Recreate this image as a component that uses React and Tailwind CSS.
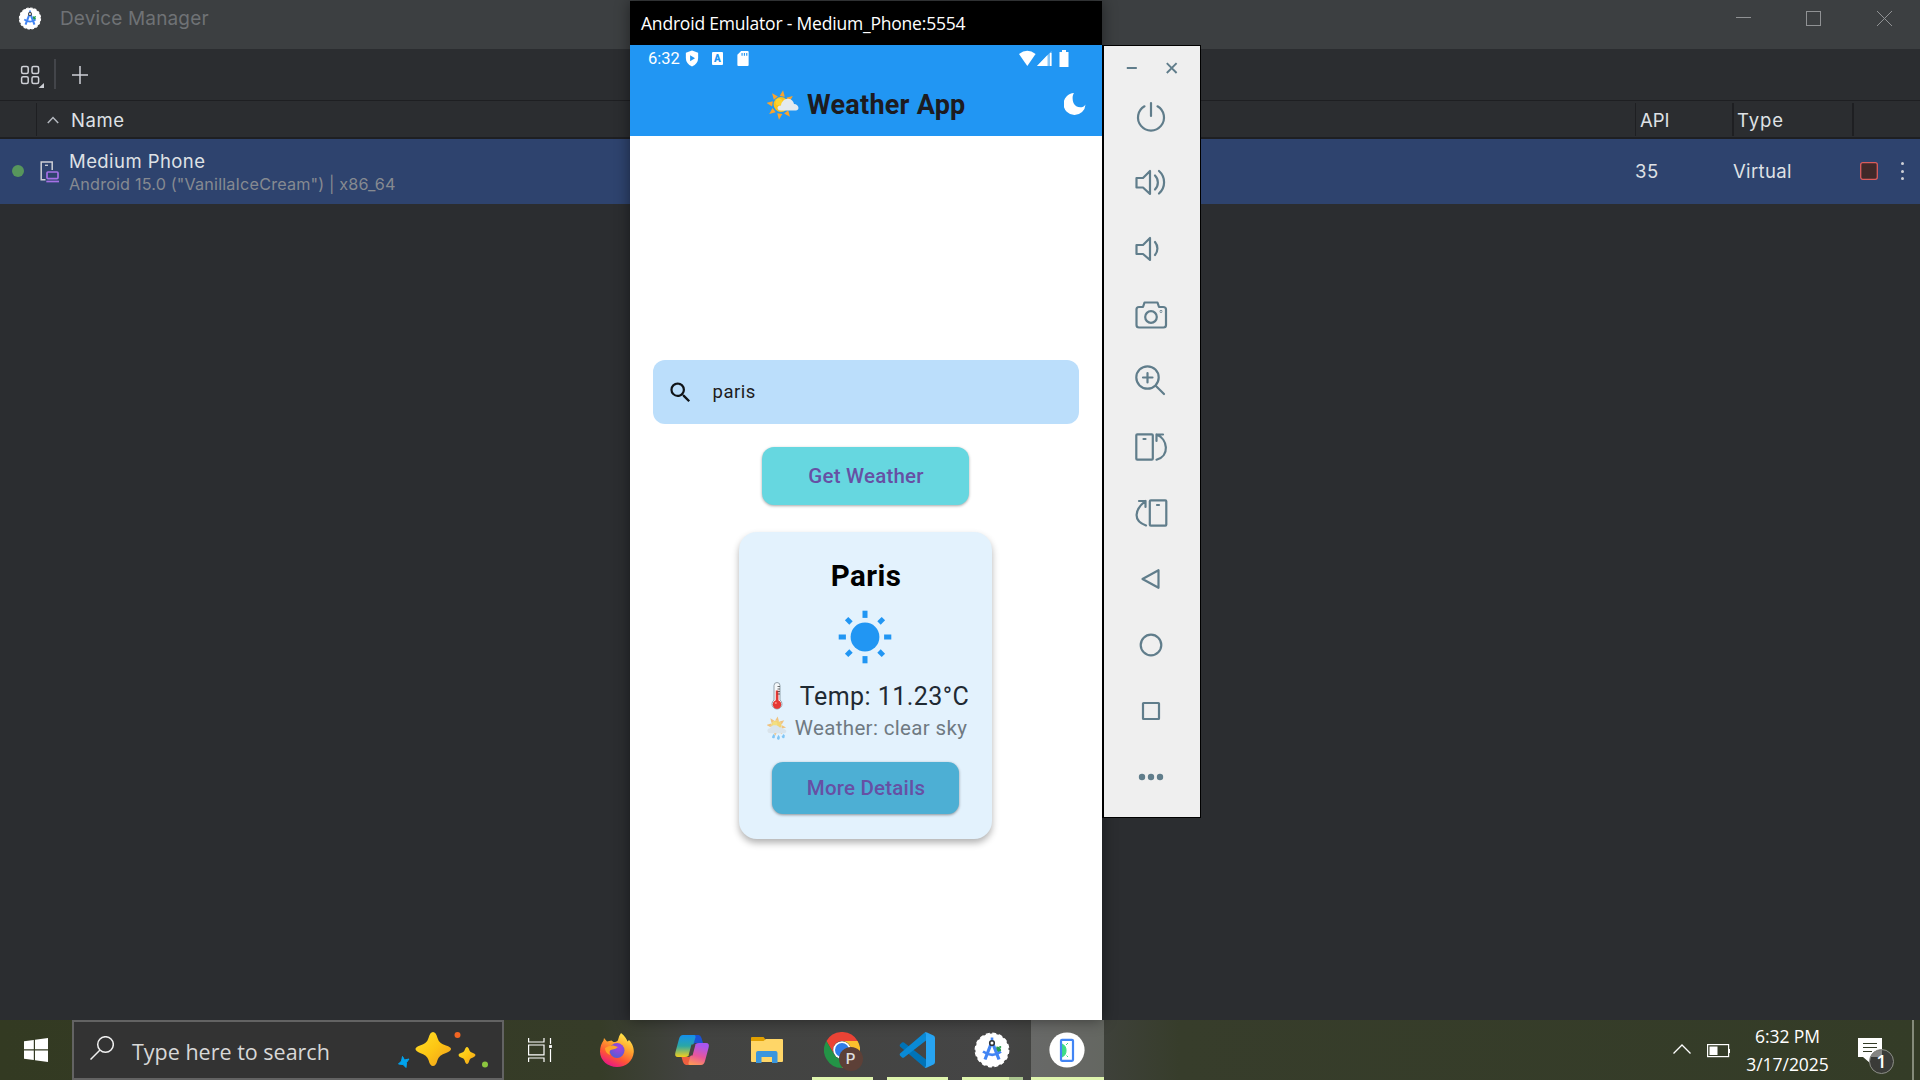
import React from "react";

const SLATE = "#607d8b";

/* ---------- weather glyphs ---------- */

function SunCloud({ rain = false, className }) {
  return (
    <svg viewBox={rain ? "1 -1 28 33" : "0 0 32 32"} className={className}>
      <g transform={rain ? "translate(0 -4)" : undefined}>
        <g fill="#f9a42c">
          {[8, 53, 98, 143, 188, 233, 278, 323].map((a) => (
            <path key={a} d="M11.4 7.4L14 1.2L16.6 7.4Z" transform={`rotate(${a} 14 17) translate(0 ${rain ? 2 : 1})`} />
          ))}
        </g>
        <circle cx="14" cy="16.5" r="7.4" fill="#fcc21b" />
        <circle cx="12" cy="14" r="3.5" fill="#fdd835" opacity=".8" />
      </g>
      <path
        d={
          rain
            ? "M6.5 23C3 23 1.5 21 1.5 19S3.400 15.500 5.800 15.800C6.500 12.500 9 11.800 12 11.800C15 11.800 17 12.500 18 14.500C20.500 13.800 22.500 15 23 16.800C26 16.500 28 18 28 20S26.500 23 24 23Z"
            : "M14 22.500C11.500 22.500 10.500 21.200 10.500 19.800S12 17.300 14 17.500C14.500 13.500 17.500 10.500 21.500 10.800C24.500 11 26.500 13.500 27 16C29.500 16 31.500 17.800 31.500 20C31.500 22 29.500 22.500 28 22.500Z"
        }
        fill={rain ? "#d3dce2" : "#e4eaee"}
      />
      {rain && (
        <g fill="#40a9f0">
          <path d="M10 24L12 26Q12.500 30 10 30Q8 30 8 28Z" />
          <path d="M17 25L19 28Q19 32 16.500 32Q14.500 31 15 29Z" />
          <path d="M24 24L26 26Q26 30 23.500 30Q21.500 29 22 27Z" />
        </g>
      )}
    </svg>
  );
}

function Thermometer() {
  return (
    <svg viewBox="0 0 12 28" className="-mt-0.5 h-7 w-3">
      <path d="M3 3.500a3 3 0 0 1 6 0v14.500a5 5 0 1 1-6 0Z" fill="#f5f8fa" stroke="#94a3ad" strokeWidth="1" />
      <path d="M4.800 8.500h2.600v10.300a3.900 3.900 0 1 1-2.600 0Z" fill="#e53935" />
      <circle cx="6" cy="22.500" r="4.200" fill="#e53935" />
      <circle cx="4.800" cy="21" r="1.100" fill="#ff8a80" />
      <path d="M6.500 4.500H9M6.500 7H9M6.500 9.500H9M6.500 12H9" stroke="#444" strokeWidth=".8" />
    </svg>
  );
}

function SunnyIcon() {
  return (
    <svg viewBox="-27 -27 54 54" className="h-[54px] w-[54px]" fill="#2196f3">
      <circle r="14.400" />
      {[0, 90, 180, 270].map((a) => (
        <rect key={a} x="-2.500" y="-26.300" width="5" height="7.200" transform={`rotate(${a})`} />
      ))}
      {[45, 135, 225, 315].map((a) => (
        <rect key={a} x="-2.400" y="-26" width="4.800" height="6.200" transform={`rotate(${a})`} />
      ))}
    </svg>
  );
}

/* ---------- Android Studio device manager ---------- */

function StudioLogo({ className }) {
  return (
    <svg viewBox="0 0 36 36" className={className}>
      <circle cx="18" cy="18" r="16.600" fill="#fff" stroke="#fff" strokeWidth="1.600" strokeDasharray="4 2.500" />
      <path d="M22.500 14.500c3 0 4.500 1.800 4.700 4l-2.400 2.500-3-3Z" fill="#249b4c" />
      <circle cx="26.200" cy="15" r="1.100" fill="#249b4c" />
      <path d="M17 12L11 27.500M19 12L25 27.500" stroke="#4285f4" strokeWidth="3.200" fill="none" />
      <path d="M9 19.500Q18 26 27 19.800" stroke="#4285f4" strokeWidth="2.600" fill="none" />
      <path d="M18 5.500V9" stroke="#4285f4" strokeWidth="2.600" />
      <circle cx="18" cy="11" r="2.300" fill="#fff" stroke="#30353a" strokeWidth="1.600" />
    </svg>
  );
}

function TitleBar() {
  return (
    <div className="flex h-[49px] items-start bg-[#3c3f41]">
      <StudioLogo className="ml-[18px] mt-[7px] h-[23px] w-6" />
      <div className="ml-[18px] mt-[7px] text-[19px] leading-6 tracking-[0.150px] text-[#6f7275]">Device Manager</div>
      <svg viewBox="0 0 160 20" className="ml-auto mr-6 mt-2 h-5 w-40" fill="none" stroke="#909294" shapeRendering="crispEdges">
        <path d="M0 9.500H15" />
        <rect x="70.500" y="3.500" width="14" height="14" />
        <path d="M141 3L156 18M156 3L141 18" shapeRendering="auto" />
      </svg>
    </div>
  );
}

function Toolbar() {
  return (
    <div className="flex h-[52px] items-start border-b border-[#1e1f22] bg-[#2b2d30]">
      <svg viewBox="0 0 25 24" className="ml-5 mt-4 h-6 w-[25px]" fill="none" stroke="#ced0d6" strokeWidth="1.500">
        <rect x="1.600" y="1.600" width="6.600" height="6.800" rx="1.500" />
        <rect x="12" y="1.600" width="6.600" height="6.800" rx="1.500" />
        <rect x="1.600" y="11.800" width="6.600" height="6.800" rx="1.500" />
        <rect x="12" y="11.800" width="6.600" height="6.800" rx="1.500" />
        <path d="M24 18v5h-5.500Z" fill="#ced0d6" stroke="none" />
      </svg>
      <div className="ml-[9px] mt-2.5 h-[30px] w-0.5 bg-[#43454a]" />
      <svg viewBox="0 0 18 20" className="ml-[15px] mt-4 h-5 w-[18px]" stroke="#ced0d6" strokeWidth="1.500">
        <path d="M9 1V19M1 10H17" />
      </svg>
    </div>
  );
}

function HeaderRow() {
  return (
    <div className="flex h-[38px] items-start border-b-2 border-[#1e1f22] bg-[#2b2d30] pt-0.5 text-[18.500px] leading-[34px] text-[#dfe1e5]">
      <div className="h-[33px] w-[37px] border-r border-[#1e1f22]" />
      <div className="flex h-[33px] flex-1 border-r border-[#1e1f22]">
        <svg viewBox="0 0 12 8" className="ml-[10px] mt-[13px] h-2 w-3" fill="none" stroke="#b4b8bf" strokeWidth="1.500">
          <path d="M.8 7L6 1.500L11.200 7" />
        </svg>
        <span className="ml-3 tracking-[0.600px]">Name</span>
      </div>
      <div className="h-[33px] w-[98px] border-r-2 border-[#1e1f22] pl-[4px]">API</div>
      <div className="h-[33px] w-[120px] border-r-2 border-[#1e1f22] pl-[3px] tracking-[0.900px]">Type</div>
      <div className="w-[66px]" />
    </div>
  );
}

function DeviceRow() {
  return (
    <div className="flex h-[65px] items-center bg-[#2e436e] text-[18.500px] text-[#dfe1e5]">
      <div className="-mt-0.5 ml-3 h-3 w-3 rounded-full bg-[#57965c]" />
      <svg viewBox="0 0 20 22" className="ml-4 h-[22px] w-5" fill="none">
        <path d="M5.500 18.800H1.200V.9H12.200V9" stroke="#ced0d6" strokeWidth="1.500" />
        <path d="M5 4.300H8" stroke="#ced0d6" strokeWidth="1.300" />
        <rect x="7" y="11" width="11" height="6.600" rx="1" stroke="#a571e6" strokeWidth="1.700" />
        <path d="M6.300 20.500H19" stroke="#a571e6" strokeWidth="1.700" />
      </svg>
      <div className="ml-[9px] flex flex-1 flex-col">
        <span className="leading-6 tracking-[0.430px]">Medium Phone</span>
        <span className="text-[16.200px] leading-[22px] tracking-[0.170px] text-[#868a91]">Android 15.0 ("VanillaIceCream") | x86_64</span>
      </div>
      <div className="w-[98px] tracking-[0.500px]">35</div>
      <div className="w-[127px] tracking-[0.350px]">Virtual</div>
      <svg viewBox="0 0 18 18" className="-mt-px h-[18px] w-[18px]">
        <rect x=".7" y=".7" width="16.600" height="16.600" rx="2" fill="#402929" stroke="#db5c5c" strokeWidth="1.300" />
      </svg>
      <div className="-mt-px ml-[22px] mr-[16px] flex w-1 flex-col items-center gap-[4.500px]">
        <i className="h-[3px] w-[3px] rounded-full bg-[#ced0d6]" />
        <i className="h-[3px] w-[3px] rounded-full bg-[#ced0d6]" />
        <i className="h-[3px] w-[3px] rounded-full bg-[#ced0d6]" />
      </div>
    </div>
  );
}

function DeviceManager() {
  return (
    <div className="h-[1020px] bg-[#2b2d30] font-['Inter',sans-serif]">
      <TitleBar />
      <Toolbar />
      <HeaderRow />
      <DeviceRow />
    </div>
  );
}

/* ---------- emulator ---------- */

function StatusBar() {
  return (
    <div className="flex h-[27px] items-center pl-[18px] pr-[33px] text-white">
      <span className="w-[37px] pt-0.5 text-[16.500px] leading-none">6:32</span>
      <svg viewBox="0 0 14 18" className="h-[17px] w-[14px]">
        <path d="M7 .5L13.500 2.800V8.500Q13.500 14.500 7 17.500Q.5 14.500 .5 8.500V2.800Z" fill="#fff" />
        <path d="M5 5.500V12L10.200 8.700Z" fill="#2196f3" />
      </svg>
      <span className="ml-[13px] flex h-[13px] w-[11px] items-center justify-center rounded-[1px] bg-white text-[10px] font-black leading-none text-[#2196f3]">A</span>
      <svg viewBox="0 0 12 16" className="ml-[14px] h-[15px] w-3">
        <path d="M4 0H11Q12 0 12 1V15Q12 16 11 16H1Q0 16 0 15V4Z" fill="#fff" />
        <path d="M5 2V5M7.500 2V5M10 2V5" stroke="#2196f3" strokeWidth="1.200" />
      </svg>
      <svg viewBox="0 0 50 18" className="ml-auto h-[18px] w-[50px]" fill="#fff">
        <path d="M0 4Q8.300-2.600 16.600 4L8.300 16Z" />
        <path d="M18 16L32.500 1V16Z" fillOpacity=".45" />
        <path d="M18 16L28.500 5V16ZM31 3H32.500V16H31Z" />
        <path d="M43 0H47V2H49.500V17H40.500V2H43Z" />
      </svg>
    </div>
  );
}

function Phone() {
  return (
    <div className="absolute left-[630px] top-px flex h-[1019px] w-[472px] flex-col bg-white font-['Roboto',sans-serif] shadow-[0_0_14px_rgba(0,0,0,0.450)]">
      <div className="h-11 shrink-0 bg-black pl-[11px] font-['Open_Sans',sans-serif] text-[17.500px] leading-[44px] tracking-[-0.200px] text-white">
        Android Emulator - Medium_Phone:5554
      </div>
      <div className="h-[91px] shrink-0 bg-[#2196f3]">
        <StatusBar />
        <div className="flex h-[64px] items-center pl-[137px] pr-4">
          <SunCloud className="h-8 w-8" />
          <span className="ml-[8px] pt-0.5 text-[27px] font-bold leading-none tracking-[0.250px] text-[#1d1b20]">Weather App</span>
          <svg viewBox="0 0 22 24" className="ml-auto h-6 w-[22px]" fill="#fff">
            <path d="M10 1A11 11 0 1 0 21.500 12.500C19 17 11.500 16 9.500 11C8 7 8.500 3 10 1Z" />
          </svg>
        </div>
      </div>
      <div className="flex flex-1 flex-col items-center pr-px pt-[224px]">
        <div className="flex h-16 w-[426px] items-center rounded-xl bg-[#bbdefb]">
          <svg viewBox="0 0 24 24" className="ml-[14px] h-[27px] w-[27px]" fill="#101418">
            <path d="M15.500 14h-.79l-.28-.27A6.471 6.471 0 0 0 16 9.500 6.500 6.500 0 1 0 9.500 16c1.610 0 3.090-.59 4.230-1.570l.27.28v.79l5 4.990L20.490 19l-4.990-5zm-6 0C7.010 14 5 11.990 5 9.500S7.010 5 9.500 5 14 7.010 14 9.500 11.990 14 9.500 14z" />
          </svg>
          <span className="ml-[19px] text-[18.500px] leading-none tracking-[0.500px] text-[#1d1b20]">paris</span>
        </div>
        <button className="mt-[23px] h-[58px] w-[207px] rounded-xl bg-[#66d7e0] pl-px text-[20.500px] font-medium leading-none tracking-[0.200px] text-[#6750a4] shadow-[0_1px_3px_rgba(0,0,0,0.350)]">
          Get Weather
        </button>
        <div className="mt-[27px] flex h-[307px] w-[253px] flex-col items-center rounded-[18px] bg-[#e3f2fd] shadow-[0_4px_7px_rgba(0,0,0,0.300)]">
          <div className="mt-[27px] pl-px text-[29.500px] font-bold leading-[34px] tracking-[0.400px] text-black">Paris</div>
          <div className="mt-[17px] pr-px">
            <SunnyIcon />
          </div>
          <div className="mt-[18px] flex items-center pl-1 text-[25px] leading-[29px] text-[#1f2a33]">
            <Thermometer />
            <span className="ml-[17px] mr-[-5px] tracking-[0.450px]">Temp: 11.23°C</span>
          </div>
          <div className="mt-[4px] flex items-center pl-[3px] text-[20.500px] leading-[26px] text-[#6f7a82]">
            <SunCloud rain className="h-[24px] w-[20px] opacity-60" />
            <span className="ml-[8px] tracking-[0.350px]">Weather: clear sky</span>
          </div>
          <button className="mt-[21px] h-[52px] w-[187px] rounded-[11px] bg-[#4dafd4] pl-px text-[20.500px] font-medium leading-none tracking-[0.200px] text-[#6750a4] shadow-[0_1px_3px_rgba(0,0,0,0.400)]">
            More Details
          </button>
        </div>
      </div>
    </div>
  );
}

function ToolButton({ children }) {
  return (
    <div className="flex h-[66px] items-center justify-center">
      <svg viewBox="-18 -18 36 36" className="h-9 w-9" fill="none" stroke={SLATE} strokeWidth="2.200" strokeLinejoin="round" strokeLinecap="round">
        {children}
      </svg>
    </div>
  );
}

function EmulatorToolbar() {
  return (
    <div className="absolute left-[1102px] top-[45px] h-[773px] w-[99px] border border-l-2 border-black bg-[#efefef]">
      <svg viewBox="0 0 54 14" className="ml-[22px] mt-[15px] h-[14px] w-[54px]" stroke={SLATE} strokeWidth="1.900">
        <path d="M.8 7H10.800M40.800 2.200L50.600 12M50.600 2.200L40.800 12" />
      </svg>
      <div className="mt-[9px] pr-[2px]">
        <ToolButton>
          <path d="M-6.500-10.700A13 13 0 1 0 6.500-10.700M0-14V-1" />
        </ToolButton>
        <ToolButton>
          <path d="M-14.500-5H-8L-1-12V11L-8 4.500H-14.500ZM4-7.500A10 10 0 0 1 4 6.500M8-12A15 15 0 0 1 8 10.500" />
        </ToolButton>
        <ToolButton>
          <path d="M-14.500-4H-8L-1-11V11L-8 5H-14.500ZM4-7A10 10 0 0 1 4 6" />
        </ToolButton>
        <ToolButton>
          <path d="M-14.500-5.500Q-14.500-8-12-8H-8L-6.500-12.500H6.500L8-8H12Q15-8 15-5.500V10Q15 12.500 12.500 12.500H-12Q-14.500 12.500-14.500 10Z" />
          <circle cx="0" cy="2" r="5.800" />
          <circle cx="10" cy="-3.500" r=".3" />
        </ToolButton>
        <ToolButton>
          <circle cx="-3.500" cy="-3.500" r="11.200" />
          <path d="M4.700 4.700L13 13M-8-3.500H1.500M-3.500-8V1.500" />
        </ToolButton>
        <ToolButton>
          <rect x="-14.700" y="-12.700" width="16.500" height="25.400" rx="1" />
          <path d="M-7.500-8H-5.500M5.500-12.500H12M5.500-12.500V-6M5.500-12.500C17-8 19 9 5.500 12.700" />
        </ToolButton>
        <ToolButton>
          <rect x="-1.200" y="-12.700" width="16.500" height="25.400" rx="1" />
          <path d="M6-8H8M-12-12H-5.500M-5.500-12V-6M-5.500-12C-17-3-18 8-5 12.500" />
        </ToolButton>
        <ToolButton>
          <path d="M-8.500 0L7.500-8.800V8.800Z" />
        </ToolButton>
        <ToolButton>
          <circle cx="0" cy="0" r="10.300" />
        </ToolButton>
        <ToolButton>
          <rect x="-8" y="-8" width="16" height="16" rx=".5" />
        </ToolButton>
        <ToolButton>
          <g fill={SLATE} stroke="none">
            <circle cx="-9" cy="0" r="3.200" />
            <circle cx="0" cy="0" r="3.200" />
            <circle cx="9" cy="0" r="3.200" />
          </g>
        </ToolButton>
      </div>
    </div>
  );
}

/* ---------- taskbar ---------- */

function SparkleArt() {
  return (
    <svg viewBox="0 0 92 44" className="ml-auto mr-[13px] h-11 w-[92px]">
      <defs>
        <linearGradient id="gold" x1="0" y1="0" x2="1" y2="1">
          <stop offset="0" stopColor="#ffdf2b" />
          <stop offset=".5" stopColor="#fdc613" />
          <stop offset="1" stopColor="#ef9a20" />
        </linearGradient>
      </defs>
      <path d="M36 4Q39 4 40.500 10Q42 15.500 49 17.500Q54 19 54 21T49 25Q42 27 40.500 32Q39 38 36 38T31.500 32Q30 27 23 25Q18.500 23 18.500 21T23 17.500Q30 15.500 31.500 10Q33 4 36 4Z" fill="url(#gold)" />
      <path d="M70 19Q71.500 19 72.500 22.500Q73 24 76 25Q78.500 26 78.500 27T76 29.500Q73 30 72.500 32Q71.500 36 70 36T67.500 32Q67 30 64 29.500Q61.500 28.500 61.500 27T64 25Q67 24 67.500 22.500Q68.500 19 70 19Z" fill="url(#gold)" />
      <path d="M5.500 28.500L7.500 32L12 31L9.500 34.500L9 39.500L6 36.500L1.500 36L4.500 33Z" fill="#00a4ef" stroke="#00a4ef" strokeLinejoin="round" />
      <circle cx="60.500" cy="7" r="3" fill="#f26522" />
      <circle cx="88" cy="36.500" r="3" fill="#8cc63f" />
    </svg>
  );
}

function Firefox() {
  return (
    <svg viewBox="0 0 36 36" className="h-9 w-9">
      <defs>
        <linearGradient id="ff" x1=".8" y1="0" x2=".3" y2="1">
          <stop offset="0" stopColor="#fff44f" />
          <stop offset=".4" stopColor="#ffa22e" />
          <stop offset=".7" stopColor="#ff5634" />
          <stop offset="1" stopColor="#e8128b" />
        </linearGradient>
        <radialGradient id="ffp" cx=".6" cy=".3" r=".8">
          <stop offset="0" stopColor="#a840e0" />
          <stop offset="1" stopColor="#4c5fd0" />
        </radialGradient>
      </defs>
      <path d="M22 1C26 4 27.500 7 28.500 9.500L30 8C34 12 35 17 34.800 20C34 29 27 35 18 35S1 28.500 1 19.500C1 15 2.500 11 4.500 8.500L5 6L8 9.500L12.500 8.500L14.500 10C17 10 18.500 9.500 19 8Q20 3.500 22 1Z" fill="url(#ff)" />
      <circle cx="18" cy="18.500" r="7.500" fill="url(#ffp)" />
      <path d="M6 16Q10 13 14.500 13.500L19 15Q17 17 13.500 17.500Q9 18 11 23Q6 21 6 16Z" fill="#ffa32b" />
    </svg>
  );
}

function Copilot() {
  return (
    <svg viewBox="0 0 36 36" className="h-9 w-9">
      <defs>
        <linearGradient id="cpa" x1="0" y1="0" x2="0" y2="1">
          <stop offset="0" stopColor="#1590ee" />
          <stop offset=".5" stopColor="#2aa7a5" />
          <stop offset="1" stopColor="#f4cf1c" />
        </linearGradient>
        <linearGradient id="cpb" x1=".3" y1="0" x2="0" y2="1">
          <stop offset="0" stopColor="#a956f0" />
          <stop offset=".5" stopColor="#e8569b" />
          <stop offset="1" stopColor="#ffa24d" />
        </linearGradient>
      </defs>
      <path d="M17 3H24.500Q26.500 3 27.500 6L29 11H22Q19 11 18 14Z" fill="#1b52d4" />
      <path d="M19 33H12Q10 33 9 30L7.500 25H14Q17 25 18 22Z" fill="#ee5f3f" />
      <path d="M9 3H20Q22.500 3 21 7L16.500 21Q15 25 11 25H4Q0 25 1.500 20L5 7Q6 3 9 3Z" fill="url(#cpa)" />
      <path d="M27 33H16Q13.500 33 15 29L19.500 15Q21 11 25 11H32Q36 11 34.500 16L31 29Q30 33 27 33Z" fill="url(#cpb)" />
      <path d="M17.500 12.500H21.500L18.500 23.500H14.500Z" fill="#454540" />
    </svg>
  );
}

function Explorer() {
  return (
    <svg viewBox="0 0 36 36" className="h-9 w-9">
      <path d="M2 6Q2 5 3 5H14.500L17 8V11H2Z" fill="#e09f00" />
      <path d="M2 9H14.500L17 7H33Q34 7 34 8V29Q34 30 33 30H3Q2 30 2 29Z" fill="#ffd667" />
      <path d="M7 31V21Q7 19 9 19H26.500Q28.500 19 28.500 21V31H23V25H12.500V31Z" fill="#3a96dd" />
    </svg>
  );
}

function Chrome() {
  return (
    <div className="relative h-9 w-9">
      <svg viewBox="-18 -18 36 36" className="h-9 w-9">
        <path d="M-15.600-9A18 18 0 0 1 15.600-9H0A9 9 0 0 0-7.800 4.500Z" fill="#ea4335" />
        <path d="M15.600-9A18 18 0 0 1 0 18L7.800 4.500A9 9 0 0 0 0-9Z" fill="#fbc02d" />
        <path d="M0 18A18 18 0 0 1-15.600-9L-7.800 4.500A9 9 0 0 0 7.800 4.500Z" fill="#239346" />
        <circle r="8.800" fill="#fff" />
        <circle r="7" fill="#2f7de9" />
      </svg>
      <div className="absolute left-[15px] top-[15px] flex h-6 w-6 items-center justify-center rounded-full bg-[#5d4037] font-['Roboto',sans-serif] text-[15px] font-medium leading-none text-[#ddd]">P</div>
    </div>
  );
}

function VSCode() {
  return (
    <svg viewBox="0 0 36 36" className="h-9 w-9">
      <path d="M1 12.500L3 10.500Q4 9.800 5 10.500L27 27.500V35.500Q25.500 35.500 24.500 34.500L1 14.500Q.3 13.500 1 12.500Z" fill="#0073b7" />
      <path d="M1 23.500L3 25.500Q4 26.200 5 25.500L27 8.500V.5Q25.500 .5 24.500 1.500L1 21.500Q.3 22.500 1 23.500Z" fill="#0a8ad6" />
      <path d="M25.500 35.500Q27 35 27 33.500V2.500Q27 1 25.500 .5Q27 0 28 .5L34.500 3.500Q36 4.200 36 6V30Q36 31.800 34.500 32.500L28 35.600Q27 36 25.500 35.500Z" fill="#27a4f2" />
    </svg>
  );
}

function EmulatorIcon() {
  return (
    <svg viewBox="0 0 36 36" className="h-9 w-9">
      <circle cx="18" cy="18" r="17.600" fill="#fff" />
      <path d="M13 12A6.500 7 0 0 1 13 25Z" fill="#3ddc84" stroke="#3ddc84" />
      <path d="M17 13L19 11M17.500 23.500L19 25" stroke="#3ddc84" strokeWidth="1" />
      <rect x="12" y="7.800" width="12" height="21" rx="1" fill="none" stroke="#4285f4" strokeWidth="2.200" />
    </svg>
  );
}

function TaskApp({ children, running, active }) {
  return (
    <div className={active ? "flex h-[60px] w-[73px] flex-col items-center bg-white/20" : "flex h-[60px] w-[75px] flex-col items-center"}>
      <div className={active ? "mr-0.5 mt-3 h-9 w-9" : "mt-3 h-9 w-9"}>{children}</div>
      {running && <div className={active ? "mt-auto h-[3px] w-full bg-[#dff5ae]" : "ml-0.5 mt-auto h-[3px] w-[61px] bg-[#dff5ae]"} />}
    </div>
  );
}

function Taskbar() {
  return (
    <div className="flex h-[60px] bg-[linear-gradient(90deg,#333a22_0px,#363c28_600px,#424341_690px,#454545_1000px,#3e413a_1104px,#373d2b_1180px,#343c27_1920px)] font-['Open_Sans',sans-serif] text-white">
      <div className="flex w-[72px] justify-center pt-[18px]">
        <svg viewBox="0 0 24 24" className="h-6 w-6" fill="#fff">
          <path d="M0 3.300L9.800 2V11.300H0ZM11 1.800L24 0V11.300H11ZM0 12.500H9.800V22L0 20.700ZM11 12.500H24V24L11 22.200Z" />
        </svg>
      </div>
      <div className="flex w-[432px] items-center border-2 border-[#636363] bg-[#333]">
        <svg viewBox="0 0 24 24" className="-mt-1 ml-4 h-6 w-6" fill="none" stroke="#f0f0f0" strokeWidth="1.500">
          <circle cx="15.500" cy="8.500" r="7.800" />
          <path d="M10 14L.5 23.500" />
        </svg>
        <span className="ml-[18px] pt-1 text-[21.500px] leading-none text-[#d8d8d8]">Type here to search</span>
        <SparkleArt />
      </div>
      <div className="w-[75px] pl-6 pt-[18px]">
        <svg viewBox="0 0 26 24" className="h-6 w-[26px]" fill="none" stroke="#fff" strokeWidth="1.200">
          <path d="M.6 0V4H16V0M.6 24V20H16V24M.6 7H16V16.800H.6ZM22.500 0V24" />
          <rect x="20.500" y="6.500" width="4" height="4" fill="#fff" stroke="#363c28" />
        </svg>
      </div>
      <TaskApp><Firefox /></TaskApp>
      <TaskApp><Copilot /></TaskApp>
      <TaskApp><Explorer /></TaskApp>
      <TaskApp running><Chrome /></TaskApp>
      <TaskApp running><VSCode /></TaskApp>
      <div className="flex h-[60px] w-[77px] flex-col items-center">
        <StudioLogo className="mr-0.5 mt-3 h-9 w-9" />
        <div className="mt-auto flex">
          <div className="h-[3px] w-[47px] bg-[#dff5ae]" />
          <div className="h-[3px] w-[14px] bg-[#a9c48e]" />
        </div>
      </div>
      <TaskApp running active><EmulatorIcon /></TaskApp>
      <div className="ml-auto flex">
        <svg viewBox="0 0 18 12" className="mt-6 h-3 w-[18px]" fill="none" stroke="#fff" strokeWidth="1.300">
          <path d="M.5 9.500L9 1L17.500 9.500" />
        </svg>
        <svg viewBox="0 0 24 14" className="ml-4 mt-[24px] h-[14px] w-6" fill="none" stroke="#fff" strokeWidth="1.200">
          <rect x=".6" y=".6" width="21" height="12" />
          <path d="M22 5V9" strokeWidth="2" />
          <rect x="2.500" y="2.500" width="8" height="8.500" fill="#fff" stroke="none" />
        </svg>
        <div className="ml-[10px] w-[93px] pt-[2px] text-center text-[17.500px] leading-[28px] tracking-[-0.050px]">
          <div>6:32 PM</div>
          <div>3/17/2025</div>
        </div>
        <svg viewBox="0 0 38 42" className="ml-[22px] mt-[15px] h-[42px] w-[38px]">
          <path d="M2 3H26V22H14V28L7 22H2Z" fill="#fff" />
          <path d="M7 8.500H21M7 12.500H21M7 16.500H16" stroke="#343c27" strokeWidth="1.200" />
          <circle cx="25.500" cy="26.500" r="12" fill="#3a3b38" stroke="#8d8f88" />
          <path d="M14.500 22A12 12 0 0 1 26 15V22Z" fill="#858583" />
          <text x="25.500" y="33" fontSize="18" fontWeight="600" textAnchor="middle" fill="#fff">1</text>
        </svg>
        <div className="ml-[18px] mr-[6px] w-0.5 bg-[#858b7a]" />
      </div>
    </div>
  );
}

export default function App() {
  return (
    <div className="relative h-[1080px] w-[1920px] overflow-hidden">
      <DeviceManager />
      <Phone />
      <EmulatorToolbar />
      <Taskbar />
    </div>
  );
}
